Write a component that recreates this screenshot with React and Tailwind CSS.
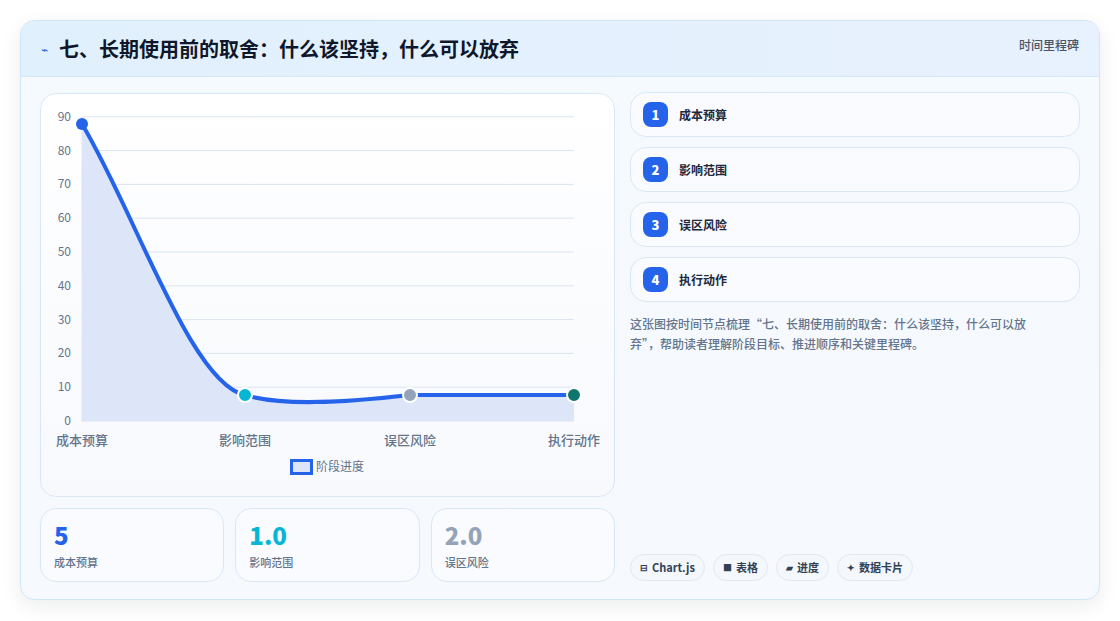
import React from "react";

const font = { fontFamily: '"Noto Sans CJK SC", "Noto Sans", sans-serif' };

const steps = ["成本预算", "影响范围", "误区风险", "执行动作"];

const Chart = () => {
  const ticks = [90, 80, 70, 60, 50, 40, 30, 20, 10, 0];
  const y = (v) => 327 - v * 3.38;
  const xs = [41, 204, 369, 533];
  return (
    <svg width="574" height="403" viewBox="0 0 574 403" className="block">
      {ticks.map((t) => (
        <g key={t}>
          <line x1="41" x2="533" y1={y(t)} y2={y(t)} stroke="#dbe4f0" strokeWidth="1" />
          <text x="30" y={y(t) + 4} textAnchor="end" fontSize="12" fill="#64748b">{t}</text>
        </g>
      ))}
      <line x1="41" x2="41" y1={y(90)} y2="327" stroke="#dbe4f0" />
      <path d="M41,30 C95,120 150,290 204,301 C240,312 300,309 369,301 L533,301 L533,327 L41,327 Z" fill="#dde5f8" />
      <path d="M41,30 C95,120 150,290 204,301 C240,312 300,309 369,301 L533,301" fill="none" stroke="#2563eb" strokeWidth="4" />
      <circle cx={xs[0]} cy="30" r="6" fill="#2563eb" />
      <circle cx={xs[1]} cy="301" r="7" fill="#06b6d4" stroke="#fff" strokeWidth="2" />
      <circle cx={xs[2]} cy="301" r="7" fill="#94a3b8" stroke="#fff" strokeWidth="2" />
      <circle cx={xs[3]} cy="301" r="7" fill="#0f766e" stroke="#fff" strokeWidth="2" />
      {steps.map((s, i) => (
        <text key={s} x={xs[i]} y="351" textAnchor="middle" fontSize="13" fontWeight="500" fill="#64748b">{s}</text>
      ))}
      <rect x="250.5" y="366.5" width="20" height="13" fill="#dde5f8" stroke="#2563eb" strokeWidth="3" />
      <text x="275" y="377" fontSize="12" fill="#64748b">阶段进度</text>
    </svg>
  );
};

const Stat = ({ value, label, color }) => (
  <div className="flex-1 rounded-2xl border border-[#dbe7f7] bg-[#f9fbff] px-[13px] pt-[11px] h-[74px]">
    <div className={`text-[24px] font-black leading-[30px] ${color}`}>{value}</div>
    <div className="mt-[4px] text-[11px] font-medium text-[#64748b]">{label}</div>
  </div>
);

const Tag = ({ icon, children }) => (
  <span className="flex h-[27px] items-center gap-1 rounded-full border border-[#e2e8f0] bg-[#f4f7fb] px-[9px] text-[11px] font-bold text-[#334155]">
    <span className="text-[9px]">{icon}</span>
    {children}
  </span>
);

export default function App() {
  return (
    <div className="h-[621px] w-[1120px] bg-white p-5" style={font}>
      <div className="flex h-[580px] flex-col overflow-hidden rounded-[14px] border border-[#cfe6f7] bg-gradient-to-b from-[#f5faff] to-[#f6f9fe] shadow-[0_6px_20px_rgba(15,23,42,0.08)]">
        <div className="flex h-[56px] items-center justify-between border-b border-[#d6e7f7] bg-gradient-to-r from-[#e1f0fd] to-[#e8f1fe] pl-[20px] pr-[20px]">
          <div className="flex items-center gap-[11px]">
            <span className="text-[12px] text-[#2563eb]">⌁</span>
            <h1 className="text-[20px] font-bold text-[#0f172a]">七、长期使用前的取舍：什么该坚持，什么可以放弃</h1>
          </div>
          <span className="self-start pt-[15px] text-[12px] font-medium text-[#475569]">时间里程碑</span>
        </div>
        <div className="flex flex-1 gap-[15px] px-[19px] pt-[16px]">
          <div className="flex w-[575px] flex-col gap-[11px]">
            <div className="h-[404px] overflow-hidden rounded-2xl border border-[#dbe7f7] bg-gradient-to-b from-white to-[#f7f9fd]">
              <Chart />
            </div>
            <div className="flex gap-[11px]">
              <Stat value="5" label="成本预算" color="text-[#2563eb]" />
              <Stat value="1.0" label="影响范围" color="text-[#06b6d4]" />
              <Stat value="2.0" label="误区风险" color="text-[#94a3b8]" />
            </div>
          </div>
          <div className="-mt-px flex flex-1 flex-col">
            <div className="flex flex-col gap-[10px]">
              {steps.map((s, i) => (
                <div key={s} className="flex h-[45px] items-center gap-[11px] rounded-2xl border border-[#dbe7f7] bg-[#f9fbff] px-[12px]">
                  <span className="flex h-[25px] w-[25px] items-center justify-center rounded-lg bg-[#2563eb] text-[13px] font-extrabold text-white">{i + 1}</span>
                  <span className="text-[12px] font-bold text-[#1e293b]">{s}</span>
                </div>
              ))}
            </div>
            <p className="mt-[12px] pr-[28px] text-[12px] font-medium leading-[20px] text-[#64748b]">
              这张图按时间节点梳理“七、长期使用前的取舍：什么该坚持，什么可以放弃”，帮助读者理解阶段目标、推进顺序和关键里程碑。
            </p>
            <div className="mt-auto mb-[18px] flex gap-[8px]">
              <Tag icon="⊟">Chart.js</Tag>
              <Tag icon="■">表格</Tag>
              <Tag icon="▰">进度</Tag>
              <Tag icon="✦">数据卡片</Tag>
            </div>
          </div>
        </div>
      </div>
    </div>
  );
}
